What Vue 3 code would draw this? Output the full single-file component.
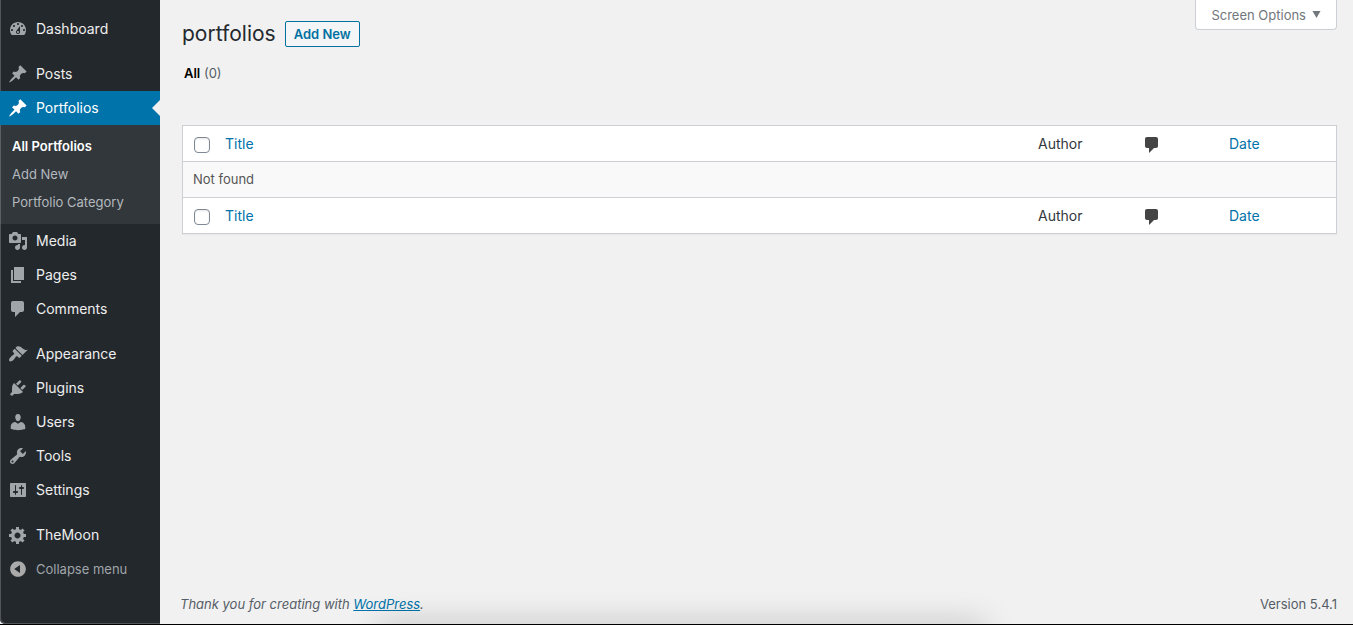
<script setup>
import { ref } from 'vue'

const icons = {
  dashboard: 'M3.76 16h12.48c1.1-1.37 1.76-3.11 1.76-5 0-4.42-3.58-8-8-8s-8 3.58-8 8c0 1.89.66 3.63 1.76 5zM10 4c.55 0 1 .45 1 1s-.45 1-1 1-1-.45-1-1 .45-1 1-1zM6 6c.55 0 1 .45 1 1s-.45 1-1 1-1-.45-1-1 .45-1 1-1zm8 0c.55 0 1 .45 1 1s-.45 1-1 1-1-.45-1-1 .45-1 1-1zm-5.37 5.55L12 7v6c0 1.1-.9 2-2 2s-2-.9-2-2c0-.57.24-1.08.63-1.45zM4 10c.55 0 1 .45 1 1s-.45 1-1 1-1-.45-1-1 .45-1 1-1zm12 0c.55 0 1 .45 1 1s-.45 1-1 1-1-.45-1-1 .45-1 1-1zm-5 3c0-.55-.45-1-1-1s-1 .45-1 1 .45 1 1 1 1-.45 1-1z',
  pin: 'M10.44 3.02l1.82-1.82 6.36 6.35-1.83 1.82c-1.05-.68-2.48-.57-3.41.36l-.75.75c-.92.93-1.04 2.35-.35 3.41l-1.83 1.82-2.41-2.41-2.8 2.79c-.42.42-3.38 2.71-3.8 2.29s1.86-3.39 2.28-3.81l2.79-2.79L4.1 9.36l1.83-1.82c1.05.69 2.48.57 3.4-.36l.75-.75c.93-.92 1.05-2.35.36-3.41z',
  media: 'M13 11V4c0-.55-.45-1-1-1h-1.67L9 1H5L3.67 3H2c-.55 0-1 .45-1 1v7c0 .55.45 1 1 1h10c.55 0 1-.45 1-1zM7 4.5c1.38 0 2.5 1.12 2.5 2.5S8.38 9.5 7 9.5 4.5 8.38 4.5 7 5.62 4.5 7 4.5zM14 6h5v10.5c0 1.38-1.12 2.5-2.5 2.5S14 17.88 14 16.5s1.12-2.5 2.5-2.5c.17 0 .34.02.5.05V9h-3V6zm-4 8.05V13h2v3.5c0 1.38-1.12 2.5-2.5 2.5S7 17.88 7 16.5 8.12 14 9.5 14c.17 0 .34.02.5.05z',
  page: 'M6 15V2h10v13H6zm-1 1h8v2H3V5h2v11z',
  comment: 'M5 2h9c1.1 0 2 .9 2 2v7c0 1.1-.9 2-2 2h-2l-5 5v-5H5c-1.1 0-2-.9-2-2V4c0-1.1.9-2 2-2z',
  brush: 'M14.48 11.06L7.41 3.99l1.5-1.5c.5-.56 2.3-.47 3.51.32 1.21.8 1.43 1.28 2.91 2.1 1.18.64 2.45 1.26 4.45.85zm-.71.71L6.7 4.7 4.93 6.47c-.39.39-.39 1.02 0 1.41l1.06 1.06c.39.39.39 1.03 0 1.42-.6.6-1.43 1.11-2.21 1.69-.35.26-.7.53-1.01.84C1.43 14.23.4 16.08 1.4 17.07c.99 1 2.84-.03 4.18-1.36.31-.31.58-.66.85-1.02.57-.78 1.08-1.61 1.69-2.21.39-.39 1.02-.39 1.41 0l1.06 1.06c.39.39 1.02.39 1.41 0z',
  plug: 'M13.11 4.36L9.87 7.6 8 5.73l3.24-3.24c.35-.34 1.05-.2 1.56.32.52.51.66 1.21.31 1.55zm-8 1.77l.91-1.12 9.01 9.01-1.19.84c-.71.71-2.63 1.16-3.82 1.16H6.14L4.9 17.26c-.59.59-1.54.59-2.12 0-.59-.58-.59-1.53 0-2.12l1.24-1.24v-3.88c0-1.13.4-3.19 1.09-3.89zm7.26 3.97l3.24-3.24c.34-.35 1.04-.21 1.55.31.52.51.66 1.21.31 1.55l-3.24 3.25z',
  user: 'M10 9.25c-2.27 0-2.73-3.44-2.73-3.44C7 4.02 7.82 2 9.97 2c2.16 0 2.98 2.02 2.71 3.81 0 0-.41 3.44-2.68 3.44zm0 2.57L12.72 10c2.39 0 4.52 2.33 4.52 4.53v2.49s-3.65 1.13-7.24 1.13c-3.65 0-7.24-1.13-7.24-1.13v-2.49c0-2.25 1.94-4.48 4.47-4.48z',
  wrench: 'M16.68 9.77c-1.34 1.34-3.3 1.67-4.95.99l-5.41 6.52c-.99.99-2.59.99-3.58 0s-.99-2.59 0-3.57l6.52-5.42c-.68-1.65-.35-3.61.99-4.95 1.28-1.28 3.12-1.62 4.72-1.06l-2.89 2.89 2.82 2.82 2.86-2.87c.53 1.58.18 3.39-1.08 4.65zM3.81 16.21c.4.39 1.04.39 1.43 0 .4-.4.4-1.04 0-1.43-.39-.4-1.03-.4-1.43 0-.39.39-.39 1.03 0 1.43z',
  sliders: 'M18 16V4c0-.55-.45-1-1-1H3c-.55 0-1 .45-1 1v12c0 .55.45 1 1 1h14c.55 0 1-.45 1-1zM8 11h1c.55 0 1 .45 1 1s-.45 1-1 1H8v1.5c0 .28-.22.5-.5.5s-.5-.22-.5-.5V13H6c-.55 0-1-.45-1-1s.45-1 1-1h1V5.5c0-.28.22-.5.5-.5s.5.22.5.5V11zm5-2h-1c-.55 0-1-.45-1-1s.45-1 1-1h1V5.5c0-.28.22-.5.5-.5s.5.22.5.5V7h1c.55 0 1 .45 1 1s-.45 1-1 1h-1v5.5c0 .28-.22.5-.5.5s-.5-.22-.5-.5V9z',
  gear: 'M18 12h-2.18c-.17.7-.44 1.35-.81 1.93l1.54 1.54-2.1 2.1-1.54-1.54c-.58.36-1.23.63-1.91.79V19H8v-2.18c-.68-.16-1.33-.43-1.91-.79l-1.54 1.54-2.12-2.12 1.54-1.54c-.36-.58-.63-1.23-.79-1.91H1V9.03h2.17c.16-.7.44-1.35.8-1.94L2.43 5.55l2.1-2.1 1.54 1.54c.58-.37 1.24-.64 1.93-.81V2h3v2.18c.68.16 1.33.43 1.91.79l1.54-1.54 2.12 2.12-1.54 1.54c.36.59.64 1.24.8 1.94H18V12zm-8.5 1.5c1.66 0 3-1.34 3-3s-1.34-3-3-3-3 1.34-3 3 1.34 3 3 3z',
  collapse: 'M10 2.16c4.33 0 7.84 3.51 7.84 7.84s-3.51 7.84-7.84 7.84S2.16 14.33 2.16 10 5.71 2.16 10 2.16zm2 11.72V6.12L6.18 9.97z'
}

const groups = [
  [{ label: 'Dashboard', icon: 'dashboard' }],
  [
    { label: 'Posts', icon: 'pin' },
    {
      label: 'Portfolios',
      icon: 'pin',
      current: true,
      children: ['All Portfolios', 'Add New', 'Portfolio Category']
    },
    { label: 'Media', icon: 'media' },
    { label: 'Pages', icon: 'page' },
    { label: 'Comments', icon: 'comment' }
  ],
  [
    { label: 'Appearance', icon: 'brush' },
    { label: 'Plugins', icon: 'plug' },
    { label: 'Users', icon: 'user' },
    { label: 'Tools', icon: 'wrench' },
    { label: 'Settings', icon: 'sliders' }
  ],
  [{ label: 'TheMoon', icon: 'gear' }]
]

const selected = ref(false)
</script>

<template>
  <div class="admin">
    <nav class="sidebar" aria-label="Main menu">
      <ul v-for="(group, g) in groups" :key="g" class="group">
        <li v-for="item in group" :key="item.label">
          <a href="#" class="item" :class="{ current: item.current }">
            <svg class="icon" viewBox="0 0 20 20" aria-hidden="true"><path fill-rule="evenodd" :d="icons[item.icon]" /></svg>
            <span>{{ item.label }}</span>
          </a>
          <ul v-if="item.children" class="submenu">
            <li v-for="(child, c) in item.children" :key="child">
              <a href="#" :class="{ active: c === 0 }">{{ child }}</a>
            </li>
          </ul>
        </li>
      </ul>
      <button type="button" class="item collapse">
        <svg class="icon" viewBox="0 0 20 20" aria-hidden="true"><path fill-rule="evenodd" :d="icons.collapse" /></svg>
        <span>Collapse menu</span>
      </button>
    </nav>

    <div class="content">
      <main>
        <header class="top">
          <div class="heading">
            <h1>portfolios</h1>
            <a href="#" class="add">Add New</a>
          </div>
          <button type="button" class="options">
            Screen Options
            <svg viewBox="0 0 8 7" aria-hidden="true"><path d="M0 0h8L4 7z" /></svg>
          </button>
        </header>

        <div class="filters"><a href="#">All</a> <span>(0)</span></div>

        <table>
          <colgroup>
            <col class="col-check" />
            <col />
            <col class="col-author" />
            <col class="col-comments" />
            <col class="col-date" />
          </colgroup>
          <thead>
            <tr>
              <td class="check"><input v-model="selected" type="checkbox" aria-label="Select all" /></td>
              <th scope="col"><a href="#">Title</a></th>
              <th scope="col">Author</th>
              <th scope="col" class="bubble" aria-label="Comments">
                <svg class="icon" viewBox="0 0 20 20" aria-hidden="true"><path :d="icons.comment" /></svg>
              </th>
              <th scope="col"><a href="#">Date</a></th>
            </tr>
          </thead>
          <tbody>
            <tr><td colspan="5">Not found</td></tr>
          </tbody>
          <tfoot>
            <tr>
              <td class="check"><input v-model="selected" type="checkbox" aria-label="Select all" /></td>
              <th scope="col"><a href="#">Title</a></th>
              <th scope="col">Author</th>
              <th scope="col" class="bubble" aria-label="Comments">
                <svg class="icon" viewBox="0 0 20 20" aria-hidden="true"><path :d="icons.comment" /></svg>
              </th>
              <th scope="col"><a href="#">Date</a></th>
            </tr>
          </tfoot>
        </table>
      </main>

      <footer>
        <em>Thank you for creating with <a href="#">WordPress</a>.</em>
        <span>Version 5.4.1</span>
      </footer>
    </div>
    <div class="shade" aria-hidden="true"></div>
  </div>
</template>

<style>
body {
  margin: 0;
  background: #000;
}
</style>

<style scoped>
* {
  box-sizing: border-box;
}
.admin {
  position: relative;
  display: flex;
  min-height: 100vh;
  overflow: hidden;
  border-bottom: 1px solid #000;
  background: #f1f1f1;
  color: #444;
  font: 13px/20px Inter, "Liberation Sans", sans-serif;
}
ul {
  margin: 0;
  padding: 0;
  list-style: none;
}
a {
  color: #0073aa;
  text-decoration: none;
}
.icon {
  display: block;
  flex: none;
  width: 20px;
  height: 20px;
  fill: currentColor;
}

.sidebar {
  flex: none;
  width: 160px;
  padding-top: 12px;
  background: #23282d;
  box-shadow: inset 1px -1px #50555a;
  border-bottom-left-radius: 5px;
}
.group {
  margin-bottom: 11px;
}
.group:last-of-type {
  margin-bottom: 0;
}
.item {
  position: relative;
  display: flex;
  align-items: center;
  gap: 8px;
  width: 100%;
  height: 34px;
  padding: 0 8px;
  border: 0;
  background: none;
  color: #eee;
  font: 14px/18px Inter, "Liberation Sans", sans-serif;
  text-align: left;
}
.item .icon {
  color: #a0a5aa;
}
.item.current {
  background: #0073aa;
  color: #fff;
}
.item.current .icon {
  color: #fff;
}
.item.current::after {
  content: "";
  position: absolute;
  top: 9px;
  right: 0;
  border: 8px solid transparent;
  border-left: 0;
  border-right-color: #f1f1f1;
}
.submenu {
  padding: 7px 0 8px;
  background: #32373c;
  box-shadow: inset 1px 0 #5a5f64;
}
.submenu a {
  display: block;
  padding: 5px 12px;
  color: #b4b9be;
  line-height: 18px;
}
.submenu a.active {
  color: #fff;
  font-weight: 600;
}
.item.collapse {
  color: #a0a5aa;
  font-size: 13px;
}
.item.collapse .icon {
  color: #aaa;
}

.content {
  display: flex;
  flex: 1;
  flex-direction: column;
  justify-content: space-between;
  min-width: 0;
  padding: 0 16px 10px 22px;
}
.top {
  display: flex;
  align-items: flex-start;
  justify-content: space-between;
}
.heading {
  display: flex;
  align-items: center;
  gap: 9px;
  padding-top: 19px;
}
h1 {
  margin: 0;
  color: #23282d;
  font-size: 21px;
  font-weight: 400;
  line-height: 30px;
}
.add {
  padding: 2px 8px;
  border: 1px solid #0071a1;
  border-radius: 2px;
  background: #f3f5f6;
  color: #0071a1;
  font-weight: 600;
}
.options {
  display: flex;
  align-items: center;
  gap: 6px;
  height: 30px;
  padding: 0 15px;
  border: 1px solid #ccd0d4;
  border-top: 0;
  border-radius: 0 0 4px 4px;
  background: #fff;
  color: #72777c;
  font: 13px/20px Inter, "Liberation Sans", sans-serif;
}
.options svg {
  width: 9px;
  height: 7px;
  fill: #72777c;
}
.filters {
  padding: 14px 2px 42px;
  color: #555d66;
}
.filters a {
  color: #000;
  font-weight: 600;
}

table {
  width: 100%;
  table-layout: fixed;
  border: 1px solid #ccd0d4;
  border-spacing: 0;
  background: #fff;
  box-shadow: 0 1px 1px rgba(0, 0, 0, 0.04);
}
.col-check {
  width: 32px;
}
.col-author {
  width: 114px;
}
.col-comments {
  width: 77px;
}
.col-date {
  width: 117px;
}
th,
td {
  height: 35px;
  padding: 0 10px;
  text-align: left;
}
th {
  color: #32373c;
  font-size: 14px;
  font-weight: 400;
}
thead th,
thead td,
tbody td {
  height: 36px;
  border-bottom: 1px solid #ccd0d4;
}
tbody td {
  padding-bottom: 1px;
  background: #f9f9f9;
  color: #555;
}
.check {
  padding: 0 0 0 11px;
}
.bubble {
  padding: 2px 0 0;
  color: #444;
}
input {
  display: block;
  appearance: none;
  width: 16px;
  height: 16px;
  margin: 2px 0 0;
  border: 1px solid #7e8993;
  border-radius: 4px;
  background: #fff;
  box-shadow: inset 0 1px 2px rgba(0, 0, 0, 0.1);
}
input:checked {
  background: #0073aa;
}

footer {
  display: flex;
  justify-content: space-between;
  margin-left: -2px;
  color: #555d66;
}
footer a {
  text-decoration: underline;
}
/* soft shadow rising from the lower window edge */
.shade {
  position: absolute;
  right: 368px;
  bottom: -20px;
  left: 378px;
  height: 20px;
  box-shadow: 0 0 32px rgba(0, 0, 0, 0.22);
  pointer-events: none;
}
</style>
